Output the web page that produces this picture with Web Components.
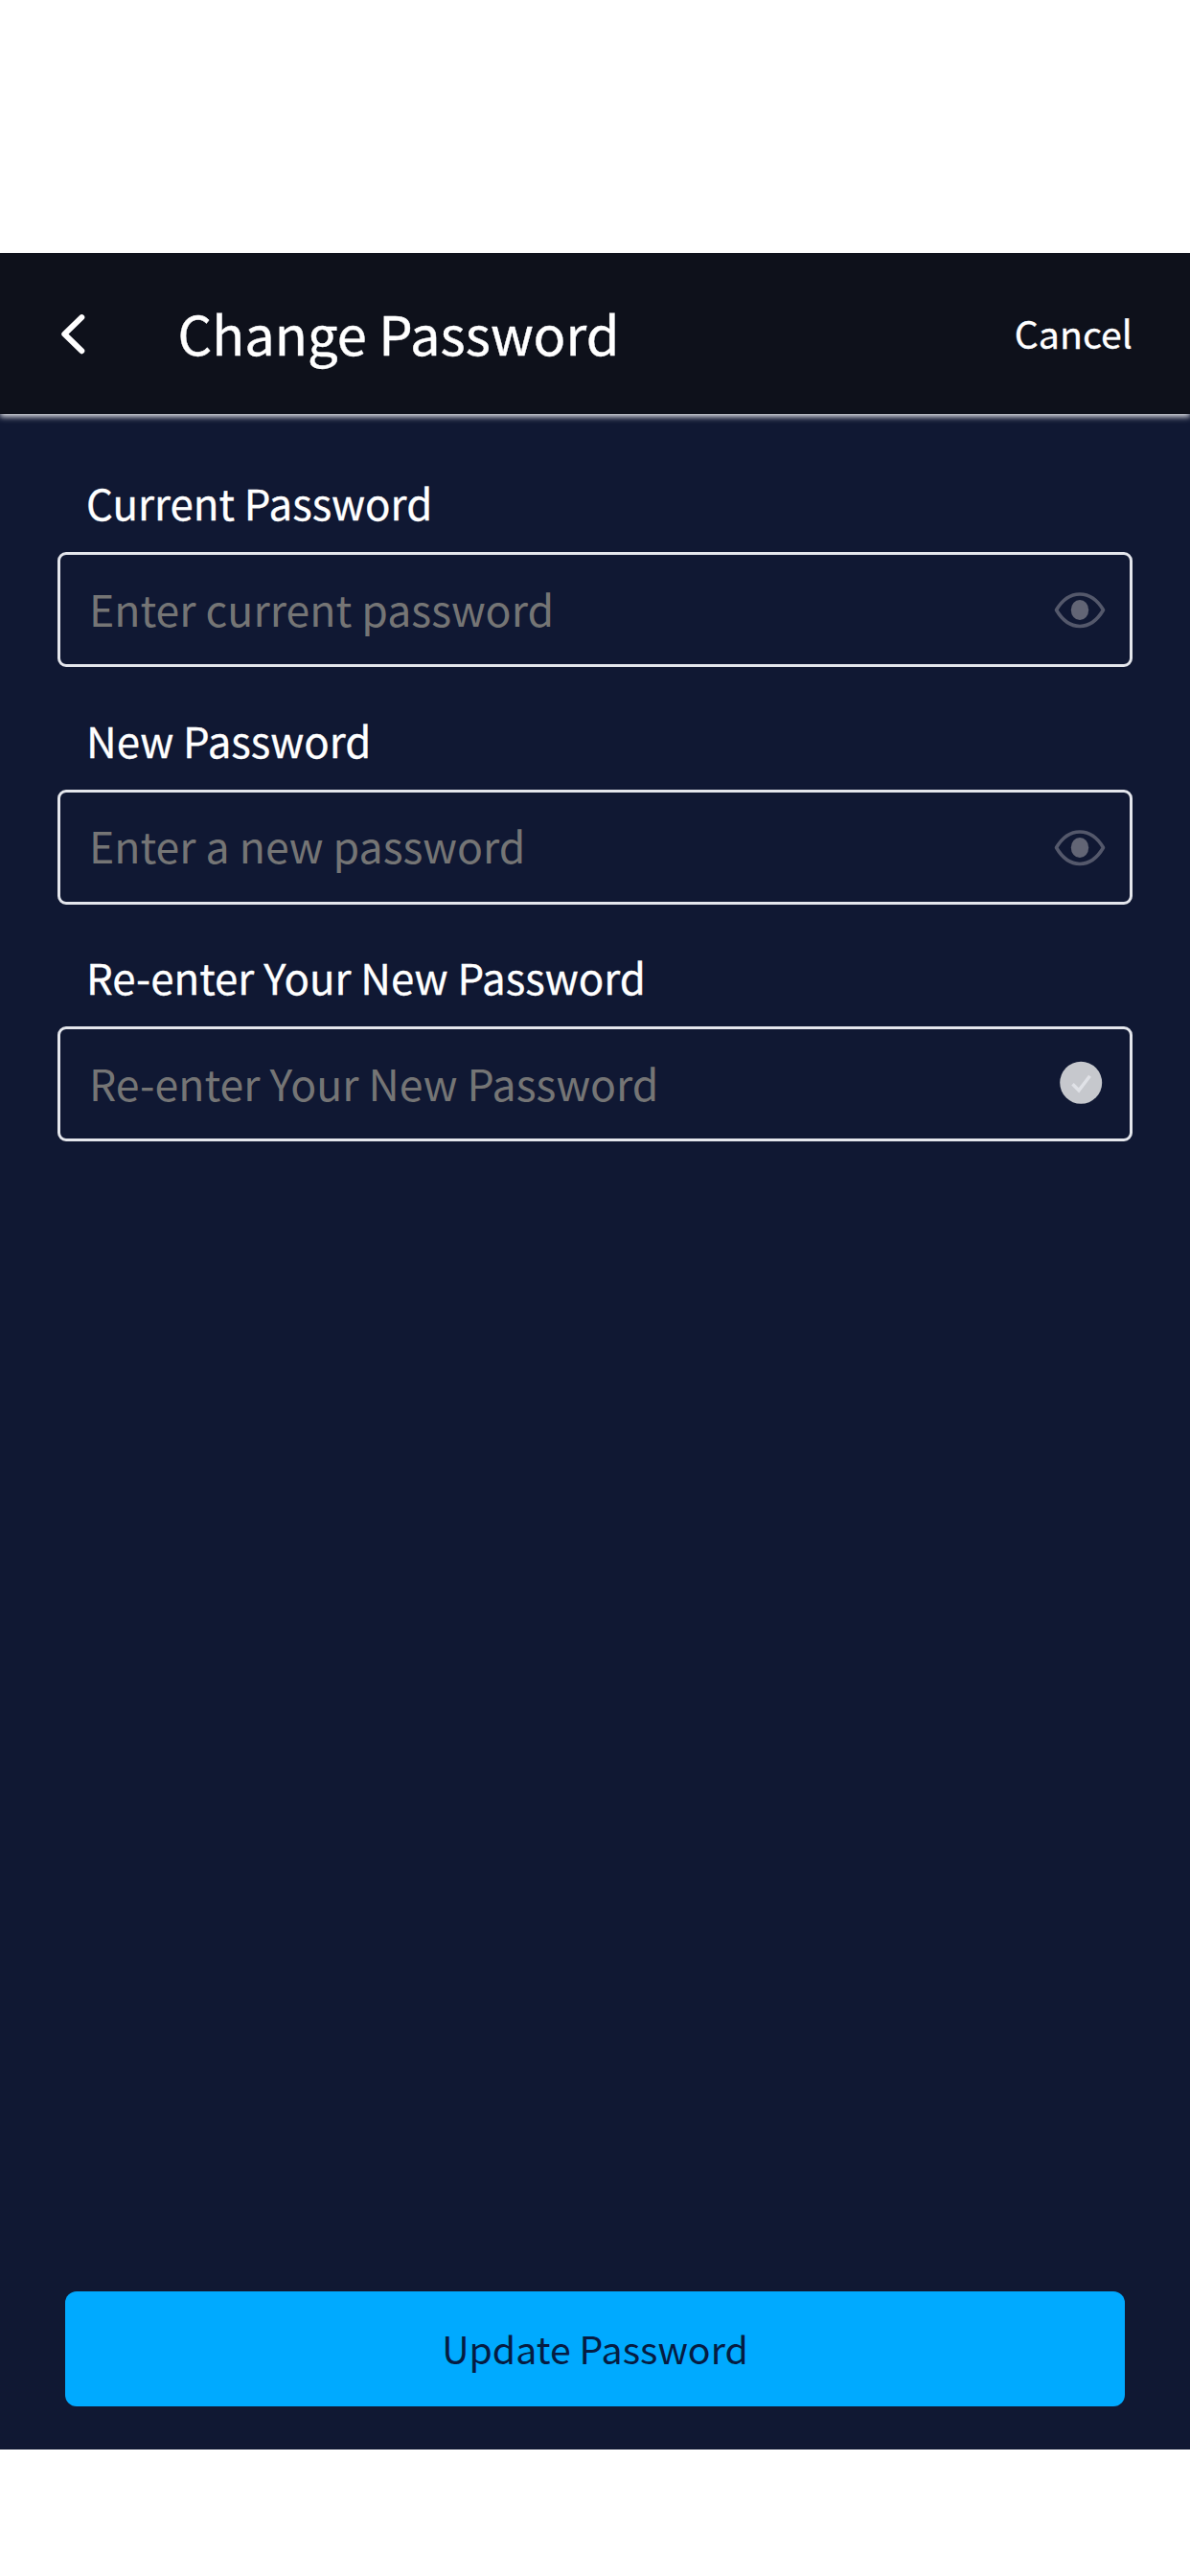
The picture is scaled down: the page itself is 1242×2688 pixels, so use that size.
<!DOCTYPE html>
<html lang="en"><head><meta charset="utf-8"><title>Change Password</title>
<style>
html,body{margin:0;background:#fff}
body{font-family:"Noto Sans CJK JP","Noto Sans CJK SC",sans-serif;padding-top:264px;height:2424px;overflow:hidden}
</style></head><body>
<password-screen>
  <app-bar slot="header">Change Password<span slot="action">Cancel</span></app-bar>
  <password-field label="Current Password" hint="Enter current password" icon="eye"></password-field>
  <password-field label="New Password" hint="Enter a new password" icon="eye"></password-field>
  <password-field label="Re-enter Your New Password" hint="Re-enter Your New Password" icon="check"></password-field>
  <primary-button slot="footer">Update Password</primary-button>
</password-screen>
<script>
const define=(name,markup,setup)=>customElements.define(name,class extends HTMLElement{
  connectedCallback(){
    if(this.shadowRoot)return;
    this.attachShadow({mode:'open'}).innerHTML=markup;
    if(setup)setup(this,this.shadowRoot);
  }
});
define('password-screen',`<style>
:host{display:flex;flex-direction:column;height:2292px;background:#101833}
main{flex:1;display:flex;flex-direction:column;gap:27.5px;padding:44px 60px 0}
footer{padding:0 68px 45px}
</style><slot name="header"></slot><main><slot></slot></main><footer><slot name="footer"></slot></footer>`);
define('app-bar',`<style>
:host{display:flex;align-items:center;height:168px;box-sizing:border-box;padding:0 60px;background:#0e111b;color:#fff;box-shadow:0 3px 6px #dcdee4;position:relative}
svg{width:32px;height:48px;flex:none}
h1{margin:0 0 0 93.500px;padding-bottom:3px;flex:1;font-weight:400;font-size:56px;line-height:80px;white-space:nowrap;-webkit-text-stroke:.4px #fff}
.a{font-size:39.300px;font-weight:400;line-height:60px;padding-bottom:2px;-webkit-text-stroke:.3px #fff}
</style><svg viewBox="0 0 32 48" fill="none" stroke="#fff" stroke-width="6" stroke-linecap="round" stroke-linejoin="round"><path d="M25.300 7.200L7.300 24.700L25.300 42.200"/></svg><h1><slot></slot></h1><div class="a"><slot name="action"></slot></div>`);
const icons={
 eye:`<svg viewBox="0 0 56 48"><path d="M3.500 24.500C10 13.500 18 8 28 8S46 13.500 52.500 24.500C46 35.500 38 41.500 28 41.500S10 35.500 3.500 24.500Z" fill="none" stroke="#54586b" stroke-width="3.600" stroke-linejoin="round"/><ellipse cx="28" cy="24.500" rx="9.200" ry="10.500" fill="#626575"/></svg>`,
 check:`<svg viewBox="0 0 56 48"><circle cx="29.200" cy="22.800" r="22" fill="#c6c8cd"/><path d="M20.500 24.300L27 30.800L38.500 15.800" fill="none" stroke="#e0e2e7" stroke-width="3.500"/></svg>`};
define('password-field',`<style>
:host{display:block}
label{display:block;height:100px;padding-left:30px;font-size:43.800px;font-weight:400;line-height:97px;color:#fff;white-space:nowrap;-webkit-text-stroke:.3px #fff}
.box{display:flex;align-items:center;justify-content:space-between;height:120px;box-sizing:border-box;border:3px solid #e4e6ec;border-radius:9px;padding:0 24px 0 30px}
.hint{font-size:44.600px;line-height:66px;padding-bottom:3px;color:#757575;white-space:nowrap}
svg{width:56px;height:48px;display:block}
</style><label></label><div class="box"><span class="hint"></span><span class="i"></span></div>`,(h,r)=>{
  r.querySelector('label').textContent=h.getAttribute('label');
  r.querySelector('.hint').textContent=h.getAttribute('hint');
  r.querySelector('.i').innerHTML=icons[h.getAttribute('icon')];
});
define('primary-button',`<style>
:host{display:block}
button{display:block;width:100%;height:120px;border:0;border-radius:12px;background:#00aaff;color:#061c42;font:400 39.3px/117px "Noto Sans CJK JP",sans-serif;padding:0 0 3px}
</style><button><slot></slot></button>`);
</script></body></html>
